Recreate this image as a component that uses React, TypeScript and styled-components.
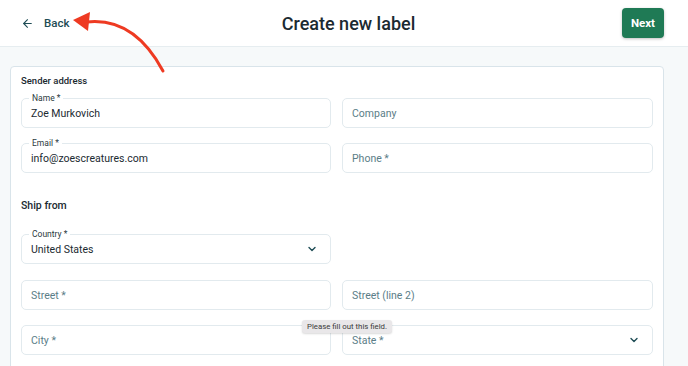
import styled, { createGlobalStyle } from "styled-components";
import { ArrowLeft, ChevronDown } from "lucide-react";

const GlobalStyle = createGlobalStyle`
  html, body {
    margin: 0;
    padding: 0;
    background: #f6f9fa;
    font-family: Roboto, "Noto Sans", sans-serif;
    overflow: hidden;
  }
`;

const Page = styled.div`
  position: relative;
  width: 688px;
  height: 366px;
  overflow: hidden;
`;

const Header = styled.header`
  display: grid;
  grid-template-columns: 1fr auto 1fr;
  align-items: center;
  box-sizing: border-box;
  height: 47px;
  padding: 0 24px 0 21px;
  background: #fff;
  border-bottom: 1px solid #e6edf0;
`;

const BackLink = styled.a`
  display: flex;
  align-items: center;
  gap: 10px;
  color: #1e4c55;
  font-size: 11.5px;
  font-weight: 500;
  text-decoration: none;
`;

const Title = styled.h1`
  margin: 0 0 0 12px;
  font-size: 18px;
  font-weight: 500;
  color: #1b2a31;
`;

const NextButton = styled.button`
  justify-self: end;
  height: 30px;
  padding: 0 9px;
  border: none;
  border-radius: 4px;
  background: #1f7a55;
  color: #fff;
  font-family: inherit;
  font-size: 11.5px;
  font-weight: 700;
  box-shadow: 0 1px 3px rgba(0, 0, 0, 0.25);
`;

const Card = styled.section`
  margin: 19px 24px 0 10px;
  padding: 7px 10px 20px;
  background: #fff;
  border: 1px solid #d9e4ea;
  border-radius: 4px;
`;

const SectionTitle = styled.h2<{ $large?: boolean }>`
  margin: 0 0 ${(p) => (p.$large ? 21 : 10)}px;
  font-size: ${(p) => (p.$large ? 10.5 : 9.5)}px;
  font-weight: 500;
  color: #1b2a31;
  line-height: 14px;
`;

const Grid = styled.div<{ $bottom: number }>`
  display: grid;
  grid-template-columns: 310px 311px;
  column-gap: 11px;
  row-gap: 15px;
  margin-bottom: ${(p) => p.$bottom}px;
`;

const Field = styled.div`
  position: relative;
  display: flex;
  align-items: center;
  justify-content: space-between;
  height: 30px;
  box-sizing: border-box;
  padding: 0 12px 0 9px;
  border: 1px solid #e2eaee;
  border-radius: 5px;
  background: #fff;
`;

const FloatLabel = styled.span`
  position: absolute;
  top: -6px;
  left: 7px;
  padding: 0 3px;
  background: #fff;
  font-size: 8.5px;
  line-height: 10px;
  color: #2b3a40;
`;

const Value = styled.span<{ $placeholder?: boolean }>`
  font-size: 10.5px;
  color: ${(p) => (p.$placeholder ? "#5b7d87" : "#1b2a31")};
`;

const Tooltip = styled.div`
  position: absolute;
  left: 302px;
  top: 320px;
  padding: 1px 5px;
  background: #e9e7e9;
  border-radius: 3px;
  font-size: 7.8px;
  line-height: 11px;
  color: #3a3a3a;
  box-shadow: 0 1px 2px rgba(0, 0, 0, 0.15);
`;

const Annotation = styled.svg`
  position: absolute;
  left: 0;
  top: 0;
  pointer-events: none;
`;

function Input({
  label,
  value,
  placeholder,
  select,
}: {
  label?: string;
  value?: string;
  placeholder?: string;
  select?: boolean;
}) {
  return (
    <Field>
      {label && <FloatLabel>{label}</FloatLabel>}
      {value ? <Value>{value}</Value> : <Value $placeholder>{placeholder}</Value>}
      {select && <ChevronDown size={12} strokeWidth={2.8} color="#1e4c55" />}
    </Field>
  );
}

export default function App() {
  return (
    <Page>
      <GlobalStyle />
      <Header>
        <BackLink href="#">
          <ArrowLeft size={13} strokeWidth={2} />
          Back
        </BackLink>
        <Title>Create new label</Title>
        <NextButton>Next</NextButton>
      </Header>

      <Card>
        <SectionTitle>Sender address</SectionTitle>
        <Grid $bottom={26}>
          <Input label="Name *" value="Zoe Murkovich" />
          <Input placeholder="Company" />
          <Input label="Email *" value="info@zoescreatures.com" />
          <Input placeholder="Phone *" />
        </Grid>

        <SectionTitle $large>Ship from</SectionTitle>
        <Grid $bottom={16}>
          <Input label="Country *" value="United States" select />
          <div />
        </Grid>
        <Grid $bottom={0}>
          <Input placeholder="Street *" />
          <Input placeholder="Street (line 2)" />
          <Input placeholder="City *" />
          <Input placeholder="State *" select />
        </Grid>
      </Card>

      <Tooltip>Please fill out this field.</Tooltip>

      <Annotation width="688" height="366" viewBox="0 0 688 366">
        <path d="M87 22 Q 134 17 163 71" fill="none" stroke="#ee3a22" strokeWidth="3" strokeLinecap="round" />
        <polygon points="73,20 90,12 88,31" fill="#ee3a22" />
      </Annotation>
    </Page>
  );
}
